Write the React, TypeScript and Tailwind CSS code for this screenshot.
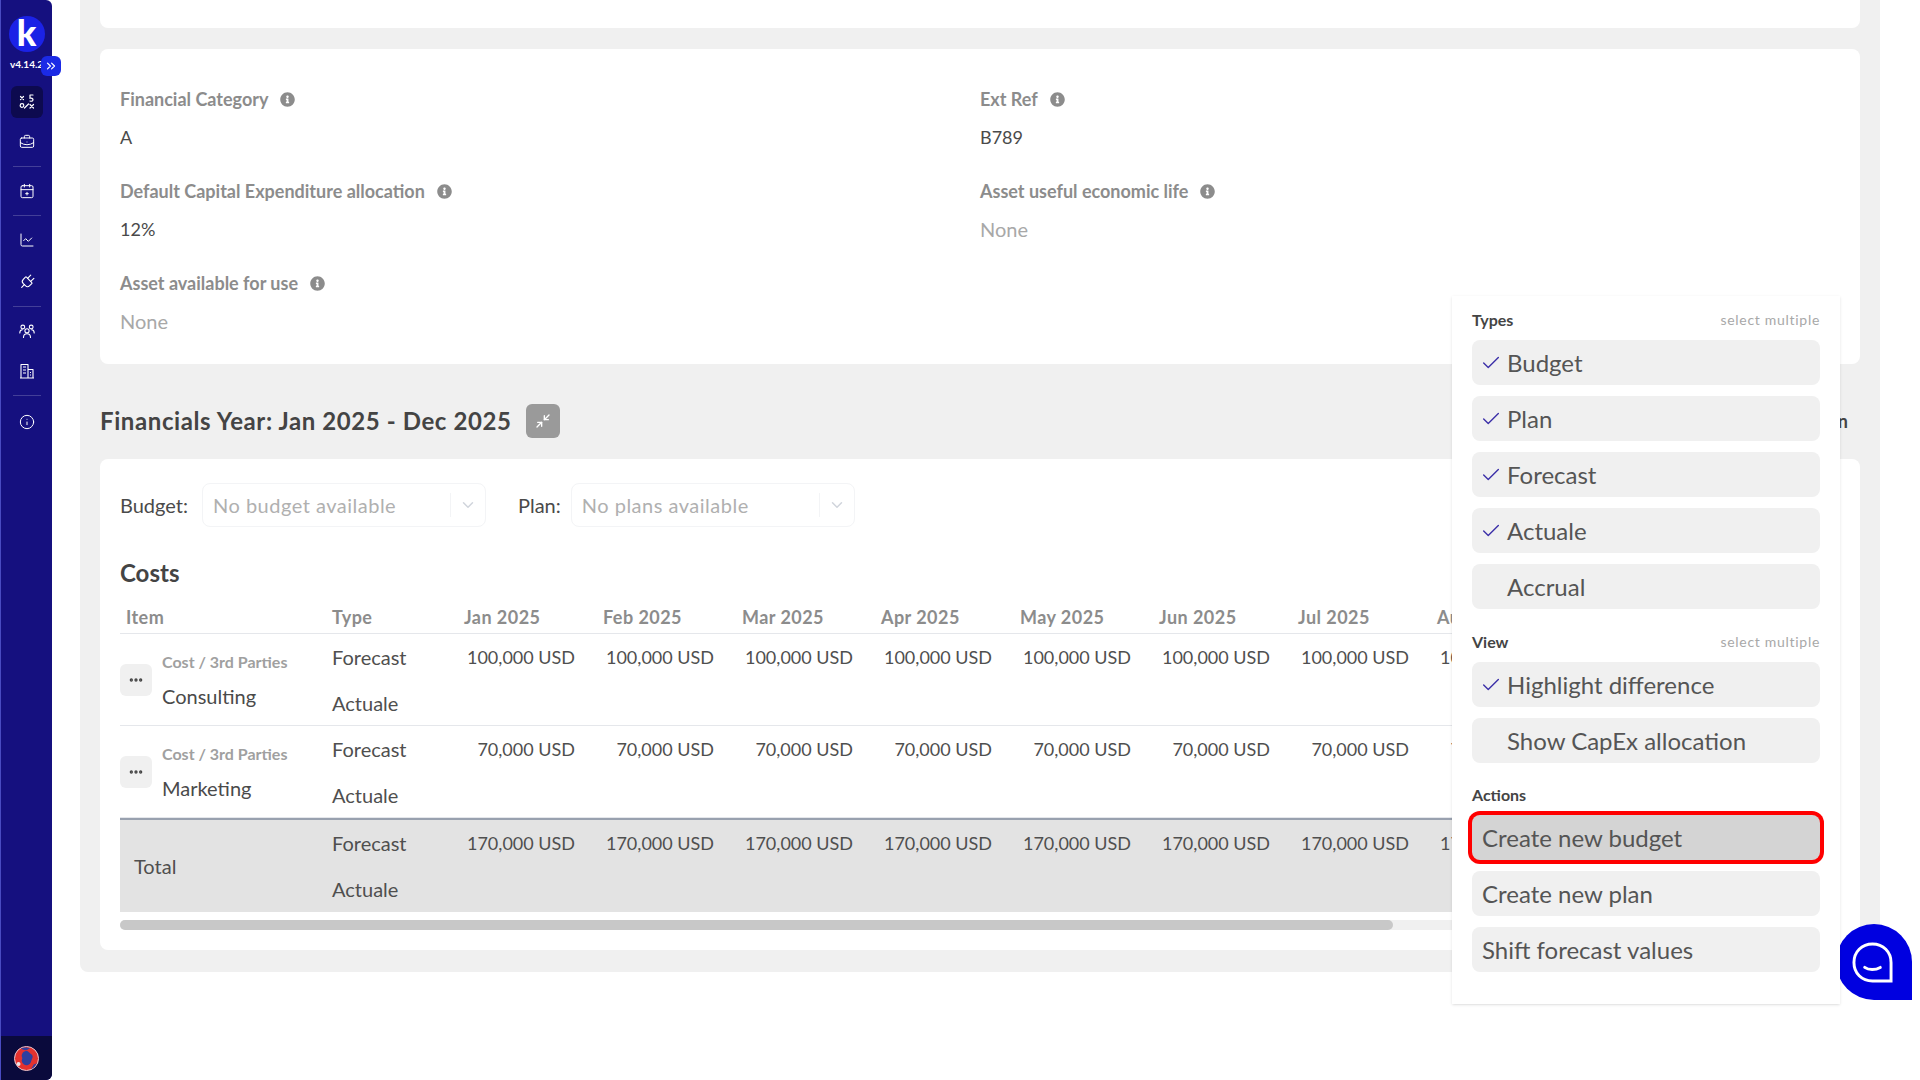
import React from 'react';
import {
  BriefcaseBusiness,
  CalendarPlus2,
  Check,
  ChartLine,
  ChevronDown,
  ChevronsRight,
  Ellipsis,
  Info,
  Minimize2,
  Plug,
} from 'lucide-react';
import { FaInfoCircle } from 'react-icons/fa';

const months = ['Jan 2025', 'Feb 2025', 'Mar 2025', 'Apr 2025', 'May 2025', 'Jun 2025', 'Jul 2025', 'Aug 2025'];

// one grid template for every table row so the columns line up
const tableCols = 'grid grid-cols-[212px_126px_repeat(8,139px)]';

const Separator = () => <div className="h-px w-7 bg-white/20" />;

const StrategyIcon = () => (
  <svg width="16" height="16" viewBox="0 0 16 16" fill="none" stroke="white" strokeWidth="1.2" strokeLinecap="round">
    <path d="M1.5 2.5l3 3M4.5 2.5l-3 3" />
    <circle cx="3" cy="11.5" r="1.8" />
    <path d="M11 1h3M11 1v3.2c1.6-.4 3 .3 3 1.6 0 1.2-1.500 1.800-3 1.200M5.500 14l4-4" />
    <path d="M11 10.500l3.500 3.500M14.500 10.500l-3.500 3.500" />
  </svg>
);

const TeamIcon = () => (
  <svg width="16" height="16" viewBox="0 0 16 16" fill="none" stroke="white" strokeWidth="1.1" strokeLinecap="round">
    <circle cx="3.800" cy="4" r="1.900" />
    <circle cx="12.200" cy="4" r="1.900" />
    <circle cx="8" cy="7.800" r="2.100" />
    <path d="M4.500 14.500c0-2.200 1.500-3.800 3.500-3.800s3.500 1.600 3.500 3.800" />
    <path d="M.8 10c0-2 1-3.200 2.500-3.300M15.200 10c0-2-1-3.200-2.500-3.300" />
  </svg>
);

const BuildingIcon = () => (
  <svg width="16" height="16" viewBox="0 0 16 16" fill="none" stroke="white" strokeWidth="1.1" strokeLinejoin="round">
    <path d="M1 15h14M2 15V1.500h7V15M9 6.500h5V15" />
    <path d="M4 4h3M4 7h3M4 10h3M11 9.500h1M11 12h1" />
  </svg>
);

const Sidebar = () => (
  <aside className="relative flex h-screen w-13 shrink-0 flex-col items-center rounded-r-md border-l border-indigo-400/50 bg-[#15107f]">
    <div className="mt-4 flex h-9 w-9 items-center justify-center rounded-full bg-[#1b22e6] pb-1 text-4xl font-black leading-none text-white">
      k
    </div>
    <div className="mt-1.5 text-[10px] font-bold leading-3 text-white">v4.14.2</div>
    <button className="absolute left-10 top-14 flex h-5 w-5 items-center justify-center rounded-md bg-[#1b2ae6] text-white">
      <ChevronsRight size={14} />
    </button>
    <nav className="mt-4 flex flex-1 flex-col items-center gap-2 text-white">
      <div className="flex h-8 w-8 items-center justify-center rounded-md bg-[#0d0a4f]">
        <StrategyIcon />
      </div>
      <div className="flex h-8 w-8 items-center justify-center">
        <BriefcaseBusiness size={16} strokeWidth={1.5} />
      </div>
      <Separator />
      <div className="flex h-8 w-8 items-center justify-center">
        <CalendarPlus2 size={16} strokeWidth={1.5} />
      </div>
      <Separator />
      <div className="flex h-8 w-8 items-center justify-center">
        <ChartLine size={16} strokeWidth={1.5} />
      </div>
      <div className="mt-0.5 flex h-8 w-8 items-center justify-center">
        <Plug size={18} strokeWidth={1.5} className="rotate-45" />
      </div>
      <Separator />
      <div className="flex h-8 w-8 items-center justify-center">
        <TeamIcon />
      </div>
      <div className="flex h-8 w-8 items-center justify-center">
        <BuildingIcon />
      </div>
      <Separator />
      <div className="mt-0.5 flex h-8 w-8 items-center justify-center">
        <Info size={16} strokeWidth={1.5} />
      </div>
    </nav>
    <div className="flex h-11 w-full items-center justify-center rounded-br-md bg-[#0a0a3c]">
      <svg width="25" height="25" viewBox="0 0 25 25">
        <circle cx="12.500" cy="12.500" r="12" fill="#e5322f" stroke="#e8c8d0" strokeWidth="1" />
        <path d="M12 5c3 0 3 2 5 3s2 3 1 5-1 5-4 6-5-1-6-3 1-3 0-5 1-6 4-6z" fill="#2f3f9f" />
        <path d="M7 2.500c2-1 6-1.500 9-.5l-3 2c-2 .5-4 0-6-1.500zM20 18c1 .5 2 0 3-2-.5 3-3 6-6 7 1-1.500 2-3 3-5z" fill="#2f3f9f" />
        <circle cx="4.500" cy="18" r="2" fill="#f4e4e8" />
      </svg>
    </div>
  </aside>
);

const Field = ({ label, value, muted }: { label: string; value: string; muted?: boolean }) => (
  <div>
    <div className="flex h-7 items-center gap-3 text-lg font-bold text-[#8c8c8c]">
      {label}
      <FaInfoCircle size={15} />
    </div>
    <div className={`mt-2.5 leading-7 ${muted ? 'text-xl text-[#a8a8a8]' : 'text-lg text-[#4a4a4a]'}`}>{value}</div>
  </div>
);

const SelectBox = ({ text }: { text: string }) => (
  <div className="flex h-11 w-71 items-center rounded-lg border border-gray-100 pl-2.5 text-xl tracking-wide text-[#b0b0b0]">
    <span className="flex-1">{text}</span>
    <span className="h-6 w-px bg-gray-100" />
    <ChevronDown size={18} className="mx-2 text-gray-300" />
  </div>
);

const TwoLines = () => (
  <div className="text-xl text-[#4f4f4f]">
    <div className="flex h-11.5 items-center">Forecast</div>
    <div className="flex h-11.5 items-center">Actuale</div>
  </div>
);

const Row = ({ category, name, amount }: { category: string; name: string; amount: string }) => (
  <div className={`${tableCols} h-23 border-b border-gray-200`}>
    <div className="flex items-center gap-2.5">
      <button className="flex h-8 w-8 items-center justify-center rounded-md bg-[#f0f0f0] text-[#444]">
        <Ellipsis size={16} strokeWidth={3} />
      </button>
      <div>
        <div className="text-base font-bold text-[#a0a0a0]">{category}</div>
        <div className="mt-2 text-xl text-[#4a4a4a]">{name}</div>
      </div>
    </div>
    <TwoLines />
    {months.map((m) => (
      <div key={m} className="flex h-11.5 items-center justify-end pr-5.5 text-lg text-[#4f4f4f]">
        {amount}
      </div>
    ))}
  </div>
);

const Costs = () => (
  <div className="overflow-hidden">
    <div className={`${tableCols} h-8.5 items-center border-b border-gray-200 text-lg font-bold tracking-wide text-[#8c8c8c]`}>
      <div className="pl-1.5">Item</div>
      <div>Type</div>
      {months.map((m) => (
        <div key={m} className="pl-1.5">
          {m}
        </div>
      ))}
    </div>
    <Row category="Cost / 3rd Parties" name="Consulting" amount="100,000 USD" />
    <Row category="Cost / 3rd Parties" name="Marketing" amount="70,000 USD" />
    <div className={`${tableCols} h-23.5 border-t-2 border-gray-400 bg-[#e3e3e3]`}>
      <div className="flex items-center pl-3.5 text-xl text-[#4f4f4f]">Total</div>
      <TwoLines />
      {months.map((m) => (
        <div key={m} className="flex h-11.5 items-center justify-end pr-5.5 text-lg text-[#4f4f4f]">
          170,000 USD
        </div>
      ))}
    </div>
    <div className="mt-2 h-2.5 rounded-full bg-[#f0f0f0]">
      <div className="h-2.5 w-[74%] rounded-full bg-[#c8c8c8]" />
    </div>
  </div>
);

const MenuButton = ({ label, checked, plain, active }: { label: string; checked?: boolean; plain?: boolean; active?: boolean }) => (
  <button
    className={`flex h-11.25 w-full items-center rounded-lg text-left text-2xl text-[#555] ${plain ? 'px-2.5' : 'pl-2'} ${
      active ? 'bg-[#d4d4d4] ring-4 ring-[#ff0000]' : 'bg-[#f0f0f0]'
    }`}
  >
    {!plain && <span className="flex w-6.75 shrink-0">{checked && <Check size={22} strokeWidth={1.5} className="text-[#3b2fa8]" />}</span>}
    {label}
  </button>
);

const MenuHeader = ({ title, hint }: { title: string; hint?: string }) => (
  <div className="mb-2 flex h-6 items-center justify-between">
    <span className="text-base font-bold text-[#444]">{title}</span>
    {hint && <span className="text-sm tracking-wider text-[#a8a8a8]">{hint}</span>}
  </div>
);

const Popup = () => (
  <div className="absolute right-20 top-74 z-20 h-177 w-97 bg-white px-5 pt-3 shadow-sm">
    <MenuHeader title="Types" hint="select multiple" />
    <div className="flex flex-col gap-2.75">
      <MenuButton label="Budget" checked />
      <MenuButton label="Plan" checked />
      <MenuButton label="Forecast" checked />
      <MenuButton label="Actuale" checked />
      <MenuButton label="Accrual" />
    </div>
    <div className="mt-5.25">
      <MenuHeader title="View" hint="select multiple" />
    </div>
    <div className="flex flex-col gap-2.75">
      <MenuButton label="Highlight difference" checked />
      <MenuButton label="Show CapEx allocation" />
    </div>
    <div className="mt-5">
      <MenuHeader title="Actions" />
    </div>
    <div className="flex flex-col gap-2.75">
      <MenuButton label="Create new budget" plain active />
      <MenuButton label="Create new plan" plain />
      <MenuButton label="Shift forecast values" plain />
    </div>
  </div>
);

const ChatBubble = () => (
  <div className="absolute bottom-20 right-2 z-10 flex h-19 w-19 items-center justify-center rounded-full rounded-br-none bg-[#0000e0] pr-1">
    <svg width="41" height="41" viewBox="0 0 42 42" fill="none" stroke="white" strokeWidth="3" strokeLinecap="round">
      <path d="M40 40H21C10 40 2 32 2 21S10 2 21 2s19 8 19 19z" />
      <path d="M13 26c4 3 11 3 16 0" />
    </svg>
  </div>
);

export default function App() {
  return (
    <div className="relative flex h-screen overflow-hidden bg-white font-['Lato',sans-serif]">
      <Sidebar />
      <main className="ml-7 mr-10 flex-1 self-start rounded-b-lg bg-[#f0f0f0] px-5 pb-5.5">
        <div className="h-7 rounded-b-lg bg-white" />

        <section className="mt-5.25 grid h-78.75 grid-cols-2 content-start gap-y-6.5 rounded-lg bg-white px-5 pt-9">
          <Field label="Financial Category" value="A" />
          <Field label="Ext Ref" value="B789" />
          <Field label="Default Capital Expenditure allocation" value="12%" />
          <Field label="Asset useful economic life" value="None" muted />
          <Field label="Asset available for use" value="None" muted />
        </section>

        <div className="mt-10 mb-5.25 flex h-8.5 items-center gap-3.5">
          <h2 className="text-2xl font-bold tracking-wide text-[#444]">Financials Year: Jan 2025 - Dec 2025</h2>
          <button className="flex h-8.5 w-8.5 items-center justify-center rounded-md bg-[#9a9a9a] text-white">
            <Minimize2 size={16} />
          </button>
          <span className="ml-auto pr-3 text-lg font-bold text-[#444]">Plan</span>
        </div>

        <section className="rounded-lg bg-white p-5 pt-6">
          <div className="flex items-center">
            <span className="mr-3.5 text-xl text-[#4a4a4a]">Budget:</span>
            <SelectBox text="No budget available" />
            <span className="ml-8 mr-2.5 text-xl text-[#4a4a4a]">Plan:</span>
            <SelectBox text="No plans available" />
          </div>
          <h3 className="mt-8 text-2xl font-bold leading-7 text-[#444]">Costs</h3>
          <div className="mt-3.25">
            <Costs />
          </div>
        </section>
      </main>
      <Popup />
      <ChatBubble />
    </div>
  );
}
